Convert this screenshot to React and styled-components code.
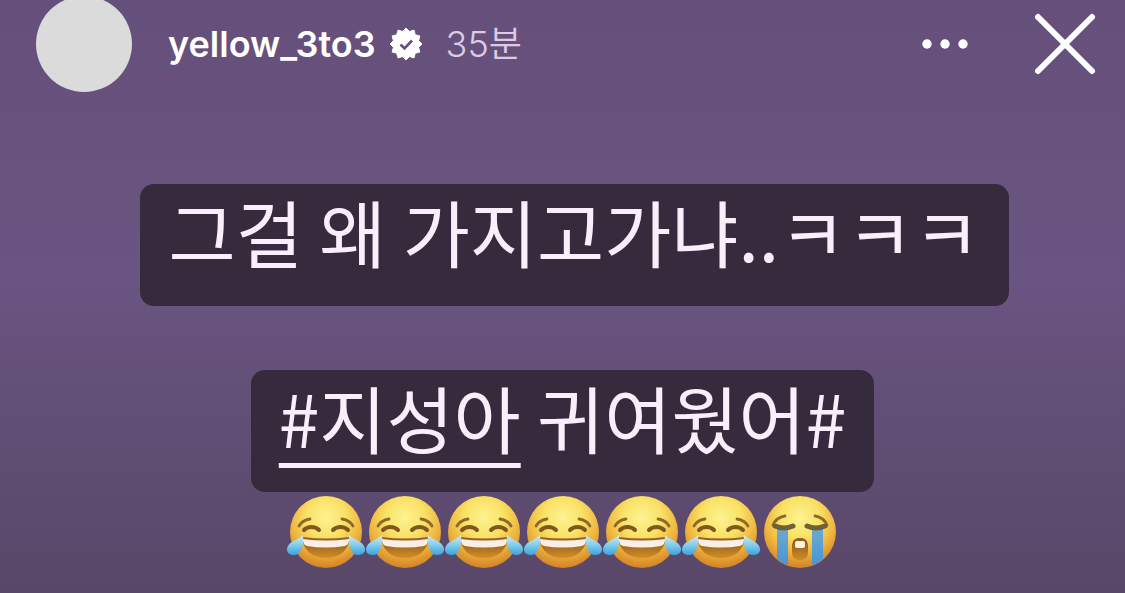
import React from 'react'
import styled, {createGlobalStyle} from 'styled-components'

const GlobalStyle = createGlobalStyle`
    * {
        box-sizing:border-box;
    }
    html, body, #root {
        height:100%;
    }
    body {
        margin:0;
        background:#65507b;
    }
`;
const Story = styled.main`
    min-height:100%;
    overflow:hidden;
    color:#fff;
    font-family:Inter,'Noto Sans CJK KR',sans-serif;
    background:linear-gradient(#65507b 0%, #68527d 20%, #6a5482 48%, #635077 65%, #594769 100%);
`;
const Header = styled.header`
    display:flex;
    align-items:center;
    height:88px;
    padding:0 28px 0 36px;
`;
const Avatar = styled.div`
    flex:none;
    width:96px;
    height:96px;
    margin-right:36px;
    border-radius:50%;
    background:#dbdbdb;
`;
const UserName = styled.a`
    color:#fff;
    font-size:36px;
    font-weight:600;
    line-height:44px;
    text-decoration:none;
`;
const Verified = styled.svg`
    flex:none;
    width:32px;
    height:32px;
    margin:0 24px 0 14px;
`;
const Time = styled.time`
    flex:1;
    color:#dccbe4;
    font-size:36px;
    font-weight:350;
    line-height:44px;
`;
const IconButton = styled.button`
    display:flex;
    flex:none;
    padding:0;
    margin-left:${({$gap}) => $gap || 0}px;
    border:0;
    background:none;
    color:#fff;
    cursor:pointer;
`;
const Stage = styled.section`
    display:flex;
    flex-direction:column;
    align-items:center;
    gap:64px;
    padding-top:96px;
`;
const Sticker = styled.div`
    display:flex;
    flex-direction:column;
    align-items:center;
    margin-left:${({$indent}) => $indent || 0}px;
`;
const Caption = styled.p`
    margin:0;
    padding:0 28px 30px;
    border-radius:14px;
    background:#362a3d;
    color:#f8effa;
    font-family:'Noto Sans CJK KR',sans-serif;
    font-size:73px;
    line-height:92px;
    white-space:nowrap;
`;
const HashTag = styled.a`
    color:inherit;
    text-decoration:underline;
    text-decoration-thickness:5px;
    text-decoration-skip-ink:none;
    text-underline-offset:15px;
`;
const EmojiRow = styled.div`
    display:flex;
`;
const EmojiSvg = styled.svg`
    display:block;
    width:79px;
    height:78px;
`;

// twelve pointed badge, outer and inner radius alternate
const badgePoints = Array.from({length: 24}, (_, i) => {
    const r = i % 2 ? 13 : 16
    const a = (i * 15 - 90) * Math.PI / 180
    return `${(16 + r * Math.cos(a)).toFixed(2)},${(16 + r * Math.sin(a)).toFixed(2)}`
}).join(' ')

const EmojiDefs = () => (
    <svg width="0" height="0" display="block" aria-hidden="true">
        <defs>
            <radialGradient id="face" cx="0.5" cy="0.3" r="0.7">
                <stop offset="0" stopColor="#fdf391" />
                <stop offset="0.4" stopColor="#f9e165" />
                <stop offset="0.72" stopColor="#eeb23c" />
                <stop offset="1" stopColor="#d28226" />
            </radialGradient>
            <linearGradient id="tear" x1="0" y1="0" x2="0" y2="1">
                <stop offset="0" stopColor="#d3edf5" />
                <stop offset="0.5" stopColor="#83cdec" />
                <stop offset="1" stopColor="#3ba2dc" />
            </linearGradient>
            <linearGradient id="stream" x1="0" y1="0" x2="0" y2="1">
                <stop offset="0" stopColor="#6fa9cc" />
                <stop offset="1" stopColor="#4597d8" />
            </linearGradient>
            <linearGradient id="mouth" x1="0" y1="0" x2="0" y2="1">
                <stop offset="0" stopColor="#8e5a1e" />
                <stop offset="0.5" stopColor="#a9701f" />
                <stop offset="1" stopColor="#d58d2a" />
            </linearGradient>
        </defs>
    </svg>
)

const Joy = () => (
    <EmojiSvg viewBox="0 0 79 78" role="img" aria-label="joy">
        <circle cx="40" cy="40" r="36" fill="url(#face)" />
        <path d="M13 34C15 30 18 28 24 27M67 34C65 30 62 28 56 27" fill="none" stroke="#8c6a2a" strokeWidth="2.8" strokeLinecap="round" />
        <path d="M18 38C22 34 29 34 33 38M47 38C51 34 58 34 62 38" fill="none" stroke="#80581f" strokeWidth="4" strokeLinecap="round" />
        <path d="M16 45Q40 48 64 45C63 58 54 66 40 66S17 58 16 45Z" fill="url(#mouth)" />
        <path d="M17 47Q40 50 63 47C63 51 62 53 59 54Q40 57 21 54C18 53 17 51 17 47Z" fill="#fbeee6" />
        <path d="M17 43C18 51 16 63 8 63C-1 63 -1 54 6 50C11 47 14 46 17 43Z" fill="url(#tear)" />
        <path d="M63 43C62 51 64 63 72 63C81 63 81 54 74 50C69 47 66 46 63 43Z" fill="url(#tear)" />
    </EmojiSvg>
)

const Sob = () => (
    <EmojiSvg viewBox="0 0 79 78" role="img" aria-label="sob">
        <circle cx="40" cy="40" r="36" fill="url(#face)" />
        <path d="M17 36V67Q22 71 28 73V36ZM52 36V73Q58 71 63 67V36Z" fill="url(#stream)" />
        <path d="M13 33C15 28 19 25 25 24M67 33C65 28 61 25 55 24" fill="none" stroke="#8c6a2a" strokeWidth="2.8" strokeLinecap="round" />
        <path d="M15 34Q24 38 33 34M47 34Q56 38 65 34" fill="none" stroke="#70603a" strokeWidth="5" strokeLinecap="round" />
        <path d="M32 55C32 48 35 46 40 46S48 48 48 55V60C48 66 45 68 40 68S32 66 32 60Z" fill="url(#mouth)" />
        <rect x="35" y="49" width="10" height="7" rx="2" fill="#fff2e2" />
    </EmojiSvg>
)

const emojis = [Joy, Joy, Joy, Joy, Joy, Joy, Sob]

class App extends React.Component {

    render(){
        return(
            <Story>
                <GlobalStyle />
                <EmojiDefs />
                <Header>
                    <Avatar />
                    <UserName href="#profile">yellow_3to3</UserName>
                    <Verified viewBox="0 0 32 32" aria-hidden="true">
                        <polygon points={badgePoints} fill="#fff" stroke="#fff" strokeLinejoin="round" />
                        <path d="M10.5 16.5L14.5 20.5L22 12.5" fill="none" stroke="#65507b" strokeWidth="2.6" />
                    </Verified>
                    <Time>35분</Time>
                    <IconButton type="button" aria-label="More">
                        <svg width="48" height="48" viewBox="0 0 48 48" fill="currentColor">
                            <circle cx="6" cy="24" r="4.7" />
                            <circle cx="24" cy="24" r="4.7" />
                            <circle cx="42" cy="24" r="4.7" />
                        </svg>
                    </IconButton>
                    <IconButton type="button" aria-label="Close" $gap={64}>
                        <svg width="64" height="64" viewBox="0 0 64 64" fill="none" stroke="currentColor" strokeWidth="6" strokeLinecap="round">
                            <path d="M5 5L59 59M59 5L5 59" />
                        </svg>
                    </IconButton>
                </Header>
                <Stage>
                    <Sticker $indent={24}>
                        <Caption>그걸 왜 가지고가냐..ㅋㅋㅋ</Caption>
                    </Sticker>
                    <Sticker>
                        <Caption><HashTag href="#tag">#지성아</HashTag> 귀여웠어#</Caption>
                        <EmojiRow>
                            {emojis.map((Emoji, i) => <Emoji key={i} />)}
                        </EmojiRow>
                    </Sticker>
                </Stage>
            </Story>
        )
    }
}

export default App
